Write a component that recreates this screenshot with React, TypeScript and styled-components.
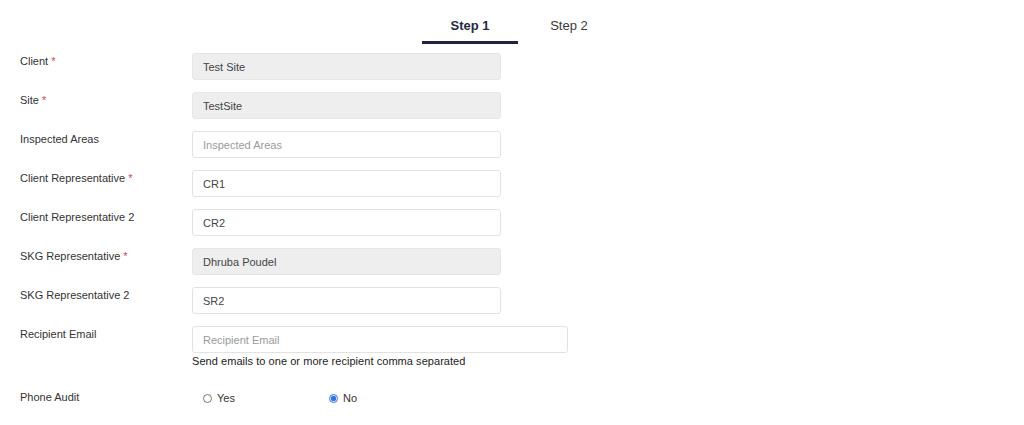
import React, { useState } from "react";
import styled, { createGlobalStyle } from "styled-components";

const GlobalStyle = createGlobalStyle`
  body {
    margin: 0;
    background: #ffffff;
    font-family: "Liberation Sans", Arial, sans-serif;
    color: #333333;
  }
`;

const Page = styled.div`
  width: 1024px;
  height: 425px;
  overflow: hidden;
  background: #ffffff;
`;

const Tabs = styled.div`
  display: flex;
  justify-content: center;
  gap: 3px;
  padding-left: 15px;
  padding-top: 18px;
  margin-bottom: 9px;
`;

const Tab = styled.div<{ $active?: boolean }>`
  width: 96px;
  text-align: center;
  font-size: 13px;
  line-height: 16px;
  font-weight: ${(p) => (p.$active ? "bold" : "normal")};
  color: ${(p) => (p.$active ? "#262a40" : "#3a3a3a")};
  padding-bottom: 7px;
  border-bottom: 3px solid ${(p) => (p.$active ? "#1f2341" : "transparent")};
`;

const Form = styled.div`
  padding-left: 20px;
`;

const Row = styled.div<{ $gap?: number }>`
  display: flex;
  align-items: flex-start;
  margin-bottom: ${(p) => p.$gap ?? 12}px;
`;

const Label = styled.div`
  width: 172px;
  flex-shrink: 0;
  font-size: 11px;
  line-height: 16px;
  color: #333333;
`;

const Required = styled.span`
  color: #d9453f;
  margin-left: 3px;
`;

const Field = styled.div`
  display: flex;
  flex-direction: column;
`;

const Input = styled.input<{ $wide?: boolean }>`
  box-sizing: border-box;
  width: ${(p) => (p.$wide ? 376 : 309)}px;
  height: 27px;
  padding: 0 10px;
  border: 1px solid #e2e2e2;
  border-radius: 3px;
  font-family: "Liberation Sans", Arial, sans-serif;
  font-size: 11px;
  color: #444444;
  background: #ffffff;
  outline: none;

  &:disabled {
    background: #eeeeee;
    border-color: #e6e6e6;
    color: #444444;
  }

  &::placeholder {
    color: #9a9a9a;
  }
`;

const Help = styled.div`
  font-size: 11px;
  line-height: 15px;
  color: #222222;
  margin-top: 1px;
  letter-spacing: 0.05px;
`;

const RadioGroup = styled.div`
  display: flex;
  padding-left: 11px;
  padding-top: 1px;
`;

const RadioOption = styled.label`
  width: 126px;
  display: flex;
  align-items: center;
  gap: 5px;
  font-size: 11px;
  line-height: 16px;
  color: #333333;

  input {
    margin: 0;
    width: 9px;
    height: 9px;
    accent-color: #2f74e0;
  }
`;

type FieldDef = {
  label: string;
  required?: boolean;
  value?: string;
  placeholder?: string;
  disabled?: boolean;
};

const fields: FieldDef[] = [
  { label: "Client", required: true, value: "Test Site", disabled: true },
  { label: "Site", required: true, value: "TestSite", disabled: true },
  { label: "Inspected Areas", placeholder: "Inspected Areas" },
  { label: "Client Representative", required: true, value: "CR1" },
  { label: "Client Representative 2", value: "CR2" },
  { label: "SKG Representative", required: true, value: "Dhruba Poudel", disabled: true },
  { label: "SKG Representative 2", value: "SR2" },
];

export default function App() {
  const [phoneAudit, setPhoneAudit] = useState("no");

  return (
    <Page>
      <GlobalStyle />
      <Tabs>
        <Tab $active>Step 1</Tab>
        <Tab>Step 2</Tab>
      </Tabs>
      <Form>
        {fields.map((f) => (
          <Row key={f.label}>
            <Label>
              {f.label}
              {f.required && <Required>*</Required>}
            </Label>
            <Input
              defaultValue={f.value}
              placeholder={f.placeholder}
              disabled={f.disabled}
            />
          </Row>
        ))}
        <Row $gap={20}>
          <Label>Recipient Email</Label>
          <Field>
            <Input $wide placeholder="Recipient Email" />
            <Help>Send emails to one or more recipient comma separated</Help>
          </Field>
        </Row>
        <Row>
          <Label>Phone Audit</Label>
          <RadioGroup>
            <RadioOption>
              <input
                type="radio"
                name="phoneAudit"
                checked={phoneAudit === "yes"}
                onChange={() => setPhoneAudit("yes")}
              />
              Yes
            </RadioOption>
            <RadioOption>
              <input
                type="radio"
                name="phoneAudit"
                checked={phoneAudit === "no"}
                onChange={() => setPhoneAudit("no")}
              />
              No
            </RadioOption>
          </RadioGroup>
        </Row>
      </Form>
    </Page>
  );
}
